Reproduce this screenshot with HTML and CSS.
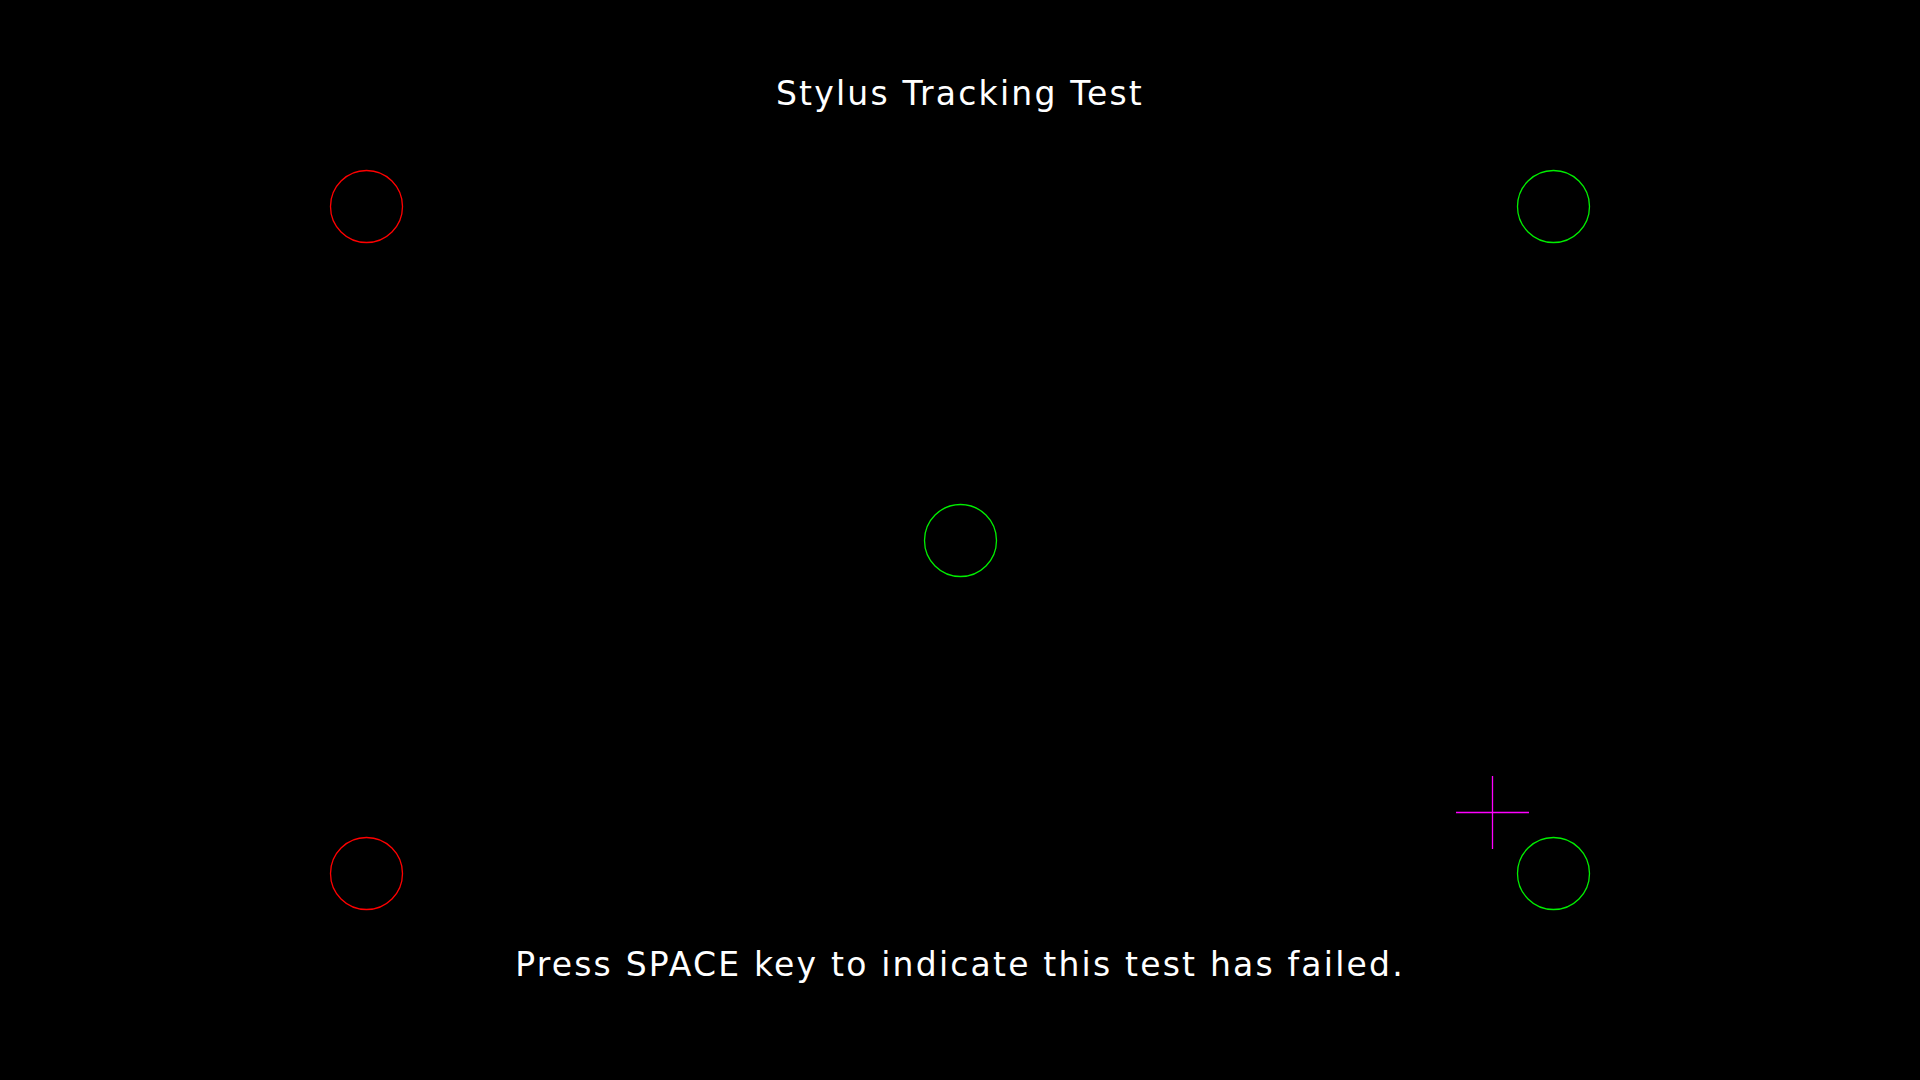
FILE: index.html
```html
<!DOCTYPE html>
<html lang="en">
<head>
<meta charset="utf-8">
<title>Stylus Tracking Test</title>
<link rel="stylesheet" href="styles.css">
</head>
<body>
<main class="screen">
  <h1 class="title">Stylus Tracking Test</h1>
  <svg class="canvas" width="1920" height="1080" viewBox="0 0 1920 1080" aria-hidden="true">
    <circle class="target target-miss" cx="366.5" cy="206.5" r="36"/>
    <circle class="target target-hit" cx="1553.5" cy="206.5" r="36"/>
    <circle class="target target-hit" cx="960.5" cy="540.5" r="36"/>
    <circle class="target target-miss" cx="366.5" cy="873.5" r="36"/>
    <circle class="target target-hit" cx="1553.5" cy="873.5" r="36"/>
    <g class="cursor">
      <line x1="1492.5" y1="776" x2="1492.5" y2="849"/>
      <line x1="1456" y1="812.5" x2="1529" y2="812.5"/>
    </g>
  </svg>
  <p class="prompt">Press SPACE key to indicate this test has failed.</p>
</main>
</body>
</html>
```

FILE: styles.css
```css
html, body {
  margin: 0;
  padding: 0;
  background: #000;
}

.screen {
  position: relative;
  width: 1920px;
  height: 1080px;
  box-sizing: border-box;
  padding: 75px 0 96px;
  display: flex;
  flex-direction: column;
  justify-content: space-between;
  align-items: center;
  overflow: hidden;
  font-family: "DejaVu Sans", Verdana, sans-serif;
  color: #fff;
}

.title,
.prompt {
  margin: 0;
  font-size: 33px;
  font-weight: normal;
  line-height: 38px;
  letter-spacing: 2.2px;
  text-align: center;
  position: relative;
  z-index: 1;
}

.canvas {
  position: absolute;
  left: 0;
  top: 0;
}

.target {
  fill: none;
  stroke-width: 1.3;
}

.target-miss {
  stroke: #ff0000;
}

.target-hit {
  stroke: #00ee00;
}

.cursor line {
  stroke: #ff00ff;
  stroke-width: 1.3;
}
```
